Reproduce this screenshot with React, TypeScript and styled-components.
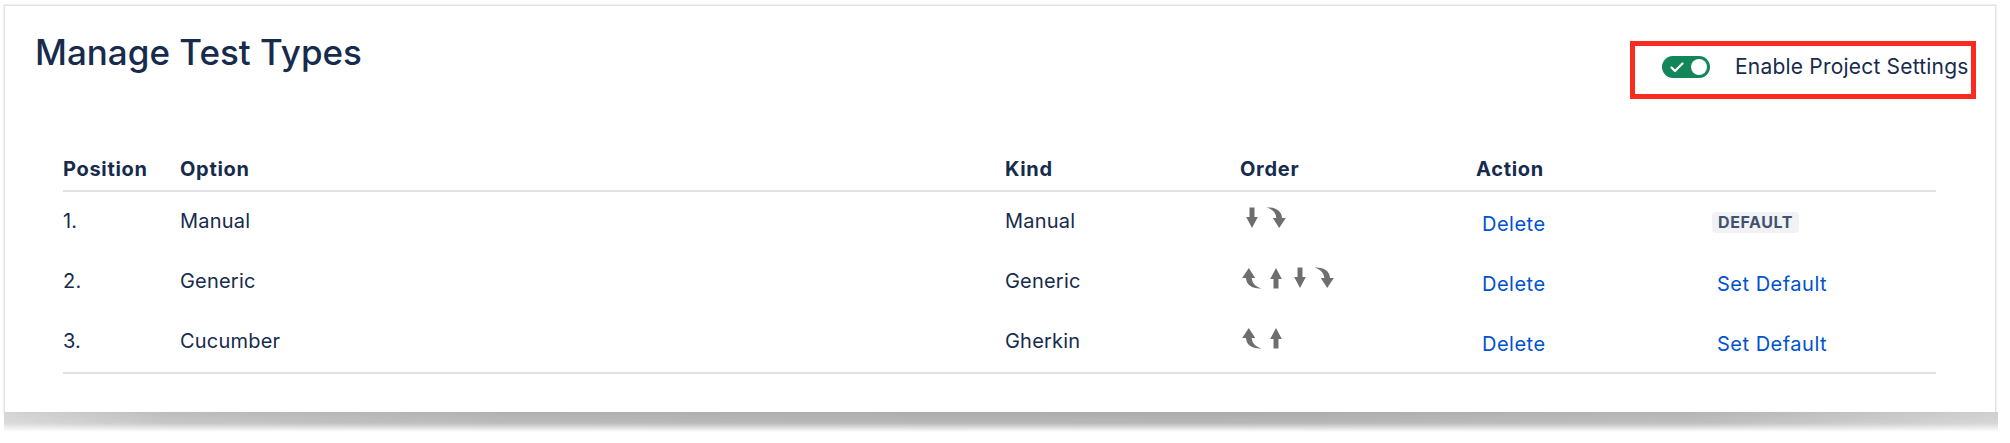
import React from "react";
import styled, { createGlobalStyle } from "styled-components";

const GlobalStyle = createGlobalStyle`
  html, body { margin: 0; padding: 0; background: #ffffff; }
  body { font-family: Inter, "Noto Sans", "Liberation Sans", sans-serif; color: #172b4d; }
  * { box-sizing: border-box; }
`;

const Page = styled.div`
  padding: 5px 14px 30px 4px;
`;

const Card = styled.section`
  position: relative;
  height: 408px;
  background: #ffffff;
  border: 1px solid #e2e2e2;
  box-shadow: 0 0 2px rgba(0, 0, 0, 0.18);
  padding-top: 26px;

  &::after {
    content: "";
    position: absolute;
    left: -1px;
    right: -3px;
    top: 100%;
    height: 20px;
    background: linear-gradient(
      to right,
      #d4d4d4 0%,
      #bdbdbd 8%,
      #b0b0b0 25%,
      #aaaaaa 60%,
      #b4b4b4 85%,
      #cfcfcf 100%
    );
    -webkit-mask-image: linear-gradient(to bottom, #000 0%, rgba(0,0,0,0.85) 55%, transparent 100%);
    mask-image: linear-gradient(to bottom, #000 0%, rgba(0,0,0,0.85) 55%, transparent 100%);
  }
`;

const Header = styled.header`
  display: flex;
  justify-content: space-between;
  align-items: flex-start;
  padding: 0 19px 0 30px;
`;

const Title = styled.h2`
  margin: 0;
  font-size: 35px;
  font-weight: 500;
  line-height: 40px;
  color: #172b4d;
`;

const SettingsBox = styled.div`
  margin-top: 9px;
  width: 346px;
  height: 58px;
  border: 5px solid #fb2b1f;
  display: flex;
  align-items: center;
  gap: 25px;
  padding: 0 4px 7px 27px;
`;

const Toggle = styled.span<{ $on: boolean }>`
  position: relative;
  display: inline-flex;
  align-items: center;
  width: 48px;
  height: 22px;
  border-radius: 11px;
  background: ${(p) => (p.$on ? "#13855b" : "#c1c7d0")};
  flex: none;
`;

const Knob = styled.span`
  position: absolute;
  right: 3px;
  top: 3px;
  width: 16px;
  height: 16px;
  border-radius: 50%;
  background: #ffffff;
`;

const Check = styled.svg`
  position: absolute;
  left: 8px;
  top: 6px;
`;

const ToggleLabel = styled.span`
  font-size: 21px;
  line-height: 24px;
  letter-spacing: 0.2px;
  color: #172b4d;
  white-space: nowrap;
`;

const Table = styled.div`
  margin: 58px 59px 0 58px;
`;

const cols = "117px 825px 235px 236px 235px 1fr";

const HeadRow = styled.div`
  display: grid;
  grid-template-columns: ${cols};
  padding-bottom: 9px;
  border-bottom: 2px solid #dfe1e6;
`;

const HeadCell = styled.div`
  font-size: 20px;
  font-weight: 700;
  line-height: 24px;
  letter-spacing: 0.7px;
  color: #172b4d;
`;

const Body = styled.div`
  border-bottom: 2px solid #dfe1e6;
`;

const Row = styled.div`
  display: grid;
  grid-template-columns: ${cols};
  align-items: start;
  height: 60px;
  padding-top: 17px;
`;

const Cell = styled.div`
  font-size: 20px;
  line-height: 24px;
  letter-spacing: 0.2px;
  color: #172b4d;
`;

const OrderCell = styled.div`
  display: flex;
  margin-top: -3px;
`;

const LinkButton = styled.button`
  justify-self: start;
  border: none;
  background: none;
  padding: 3px 6px 0;
  font-family: inherit;
  font-size: 20px;
  line-height: 24px;
  letter-spacing: 0.5px;
  color: #0052cc;
  cursor: pointer;
`;

const Badge = styled.span`
  justify-self: start;
  margin: 3px 0 0 1px;
  padding: 0 6px;
  height: 21px;
  line-height: 21px;
  border-radius: 4px;
  background: #f1f2f5;
  color: #42526e;
  font-size: 16px;
  font-weight: 700;
  letter-spacing: 0.6px;
`;

type Dir = "up" | "down" | "top" | "bottom";

const ArrowIcon: React.FC<{ dir: Dir }> = ({ dir }) => {
  const straight = "M9.5 1.5 H14.5 V11 H17.8 L12 22 L6.2 11 H9.5 Z";
  const curved =
    "M2.5 1.5 C11.5 1 17.8 5 18 12 L21.8 12 L15.2 22 L8.8 12 L12.3 12 C12 7 8.5 3.2 2.5 1.5 Z";
  const d = dir === "up" || dir === "down" ? straight : curved;
  const rotate = dir === "up" || dir === "top" ? "rotate(180 12 12)" : undefined;
  return (
    <svg width="24" height="24" viewBox="0 0 24 24" aria-hidden="true">
      <path d={d} fill="#6e6e6e" transform={rotate} />
    </svg>
  );
};

type Item = {
  pos: string;
  option: string;
  kind: string;
  order: Dir[];
  isDefault: boolean;
};

const items: Item[] = [
  { pos: "1.", option: "Manual", kind: "Manual", order: ["down", "bottom"], isDefault: true },
  { pos: "2.", option: "Generic", kind: "Generic", order: ["top", "up", "down", "bottom"], isDefault: false },
  { pos: "3.", option: "Cucumber", kind: "Gherkin", order: ["top", "up"], isDefault: false },
];

export default function App() {
  return (
    <>
      <GlobalStyle />
      <Page>
        <Card>
          <Header>
            <Title>Manage Test Types</Title>
            <SettingsBox>
              <Toggle $on>
                <Check width="14" height="11" viewBox="0 0 14 11">
                  <path d="M1.5 5.5 L5 9 L12.5 1.5" fill="none" stroke="#fff" strokeWidth="2.2" strokeLinecap="round" strokeLinejoin="round" />
                </Check>
                <Knob />
              </Toggle>
              <ToggleLabel>Enable Project Settings</ToggleLabel>
            </SettingsBox>
          </Header>
          <Table>
            <HeadRow>
              <HeadCell>Position</HeadCell>
              <HeadCell>Option</HeadCell>
              <HeadCell>Kind</HeadCell>
              <HeadCell>Order</HeadCell>
              <HeadCell>Action</HeadCell>
              <HeadCell />
            </HeadRow>
            <Body>
              {items.map((it) => (
                <Row key={it.pos}>
                  <Cell>{it.pos}</Cell>
                  <Cell>{it.option}</Cell>
                  <Cell>{it.kind}</Cell>
                  <OrderCell>
                    {it.order.map((d, i) => (
                      <ArrowIcon key={i} dir={d} />
                    ))}
                  </OrderCell>
                  <LinkButton>Delete</LinkButton>
                  {it.isDefault ? <Badge>DEFAULT</Badge> : <LinkButton>Set Default</LinkButton>}
                </Row>
              ))}
            </Body>
          </Table>
        </Card>
      </Page>
    </>
  );
}
